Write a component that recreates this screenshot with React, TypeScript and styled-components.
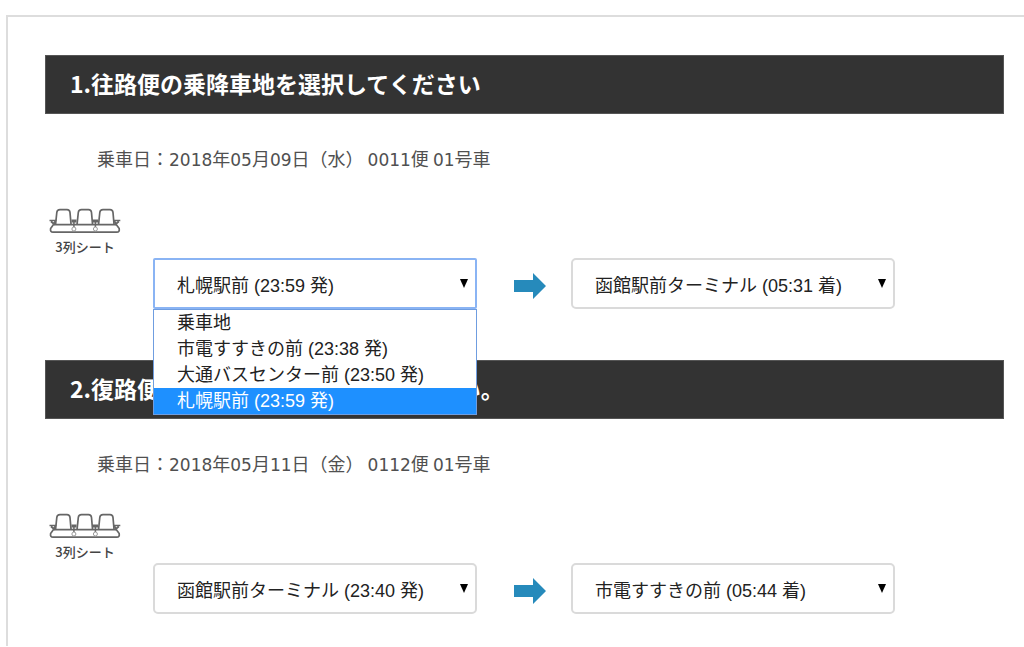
import React, { useState } from "react";
import styled, { createGlobalStyle } from "styled-components";

const GlobalStyle = createGlobalStyle`
  *, *::before, *::after { box-sizing: border-box; }
  body {
    margin: 0;
    background: #fff;
    color: #444;
    font-family: "Noto Sans CJK JP", sans-serif;
    overflow-x: hidden;
  }
`;

const Panel = styled.main`
  margin: 15px 0 0 6px;
  padding: 38px 20px 32px 37px;
  border: solid #ddd;
  border-width: 2px 0 0 2px;
`;

const Section = styled.section`
  & + & {
    margin-top: 51px;
  }
`;

const Heading = styled.h2`
  margin: 0;
  height: 59px;
  padding: 0 24px 4px;
  display: flex;
  align-items: center;
  background: #333;
  border: 1px solid #555;
  color: #fff;
  font-size: 23px;
  line-height: 32px;
  font-weight: 700;
`;

const Departure = styled.p`
  margin: 30px 0 0;
  padding-left: 52px;
  font-size: 18px;
  line-height: 28px;
  font-weight: 400;
  color: #505050;
  white-space: pre;
`;

const Digits = styled.span`
  font-family: "DejaVu Sans", sans-serif;
  font-size: 17px;
`;

const SeatType = styled.figure`
  margin: 33px 0 0;
  width: 80px;
  display: flex;
  flex-direction: column;
  align-items: center;
  gap: 2px;
`;

const SeatCaption = styled.figcaption`
  font-size: 13px;
  line-height: 20px;
  font-weight: 500;
  color: #444;
`;

const Route = styled.div`
  display: grid;
  grid-template-columns: minmax(0, 324px) 94px minmax(0, 324px);
  align-items: center;
  margin: 1px 0 0 108px;
`;

const Field = styled.div`
  position: relative;
`;

const Select = styled.select<{ $open?: boolean }>`
  appearance: none;
  display: block;
  width: 100%;
  height: 51px;
  margin: 0;
  padding: 5px 32px 0 22px;
  border: ${(p) => (p.$open ? "2px solid #8ab4f4" : "2px solid #dadada")};
  border-radius: ${(p) => (p.$open ? "2px" : "5px")};
  outline: none;
  background: #fff;
  color: #222;
  font-family: "Liberation Sans", "Noto Sans CJK JP", sans-serif;
  font-size: 18px;
  font-weight: 400;
`;

const Caret = styled.svg`
  position: absolute;
  right: 8px;
  top: 20px;
  pointer-events: none;
`;

const Options = styled.ul`
  position: absolute;
  z-index: 1;
  top: 100%;
  left: 0;
  right: 0;
  margin: 0;
  padding: 0;
  list-style: none;
  background: #fff;
  border: 1px solid #6f9de0;
  font-family: "Liberation Sans", "Noto Sans CJK JP", sans-serif;
  font-size: 18px;
  line-height: 26px;
  font-weight: 400;
`;

const Option = styled.li<{ $active: boolean }>`
  height: 26px;
  padding-left: 23px;
  white-space: nowrap;
  overflow: hidden;
  cursor: default;
  background: ${(p) => (p.$active ? "#1e90ff" : "#fff")};
  color: ${(p) => (p.$active ? "#fff" : "#222")};
`;

const ArrowCell = styled.div`
  display: flex;
  justify-content: center;
  padding: 4px 0 0 12px;
`;

function SeatIcon() {
  return (
    <svg width="72" height="28" viewBox="0 0 72 28" fill="none" stroke="#666" strokeWidth="1.7" aria-hidden="true">
      {[0, 21.5, 43].map((x) => (
        <path key={x} d={`M${x + 6.6} 17L${x + 7.8} 5.5Q${x + 8.1} 2.7 ${x + 11} 2.7H${x + 18}Q${x + 20.7} 2.7 ${x + 21} 5.5L${x + 22} 17`} />
      ))}
      <path d="M4.5 17.6H67.2M4.5 17.6L1.6 21.6Q1 25.2 4 25.2H67.8Q70.8 25.2 70.2 21.6L67.2 17.6" />
      <path d="M.5 13.5H6.5L5 17L2 14.5M71.3 13.5H65.3L66.8 17L69.8 14.5" />
      <path d="M22.5 14H27.5M44 14H49" strokeWidth="3" />
      <path d="M24.9 15V20M46.4 15V20" strokeWidth="1.5" />
      <circle cx="24.9" cy="22" r="2" stroke="#999" strokeWidth="1" fill="#fff" />
      <circle cx="46.4" cy="22" r="2" stroke="#999" strokeWidth="1" fill="#fff" />
    </svg>
  );
}

function DateLine({ text }: { text: string }) {
  return (
    <Departure>
      {text.split(/([0-9]+)/).map((part, i) => (i % 2 ? <Digits key={i}>{part}</Digits> : part))}
    </Departure>
  );
}

type StopSelectProps = { label: string; stops: string[]; initial: string; defaultOpen?: boolean };

function StopSelect({ label, stops, initial, defaultOpen = false }: StopSelectProps) {
  const [value, setValue] = useState(initial);
  const [open, setOpen] = useState(defaultOpen);
  return (
    <Field>
      <Select aria-label={label} value={value} $open={open} onChange={(e) => setValue(e.target.value)}>
        {stops.map((s) => (
          <option key={s}>{s}</option>
        ))}
      </Select>
      <Caret width="10" height="11" viewBox="0 0 10 11" aria-hidden="true">
        <path d="M1 1H9L5 10Z" fill="#000" />
      </Caret>
      {open && (
        <Options role="listbox" aria-label={label}>
          {stops.map((s) => (
            <Option
              key={s}
              role="option"
              aria-selected={s === value}
              $active={s === value}
              onClick={() => {
                setValue(s);
                setOpen(false);
              }}
            >
              {s}
            </Option>
          ))}
        </Options>
      )}
    </Field>
  );
}

type Leg = { title: string; date: string; from: StopSelectProps; to: StopSelectProps };

const legs: Leg[] = [
  {
    title: "1.往路便の乗降車地を選択してください",
    date: "乗車日：2018年05月09日（水） 0011便 01号車",
    from: {
      label: "往路 乗車地",
      stops: ["乗車地", "市電すすきの前 (23:38 発)", "大通バスセンター前 (23:50 発)", "札幌駅前 (23:59 発)"],
      initial: "札幌駅前 (23:59 発)",
      defaultOpen: true,
    },
    to: { label: "往路 降車地", stops: ["函館駅前ターミナル (05:31 着)"], initial: "函館駅前ターミナル (05:31 着)" },
  },
  {
    title: "2.復路便の乗降車地を選択してください。",
    date: "乗車日：2018年05月11日（金） 0112便 01号車",
    from: { label: "復路 乗車地", stops: ["函館駅前ターミナル (23:40 発)"], initial: "函館駅前ターミナル (23:40 発)" },
    to: { label: "復路 降車地", stops: ["市電すすきの前 (05:44 着)"], initial: "市電すすきの前 (05:44 着)" },
  },
];

export default function App() {
  return (
    <>
      <GlobalStyle />
      <Panel>
        {legs.map((leg) => (
          <Section key={leg.title}>
            <Heading>{leg.title}</Heading>
            <DateLine text={leg.date} />
            <SeatType>
              <SeatIcon />
              <SeatCaption>3列シート</SeatCaption>
            </SeatType>
            <Route>
              <StopSelect {...leg.from} />
              <ArrowCell>
                <svg width="32" height="26" viewBox="0 0 32 26" aria-hidden="true">
                  <path d="M0 7H19V0L32 13L19 26V19H0Z" fill="#268abb" />
                </svg>
              </ArrowCell>
              <StopSelect {...leg.to} />
            </Route>
          </Section>
        ))}
      </Panel>
    </>
  );
}
